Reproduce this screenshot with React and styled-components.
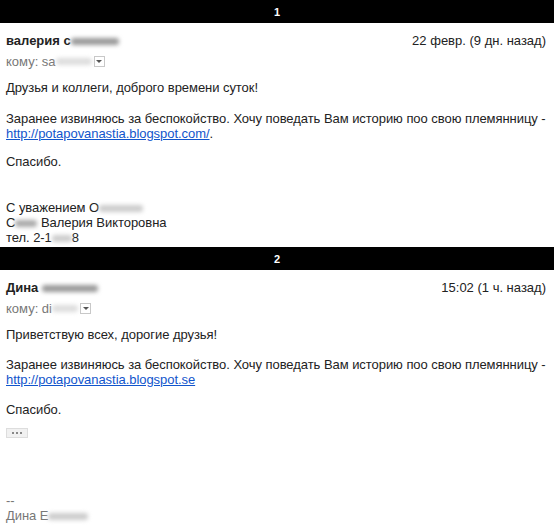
import React from 'react';
import styled, { createGlobalStyle } from 'styled-components';

const GlobalStyle = createGlobalStyle`
  body {
    margin: 0;
    background: #fff;
    font-family: "Liberation Sans", Arial, sans-serif;
    font-size: 13px;
    color: #222;
  }
`;

const Divider = styled.div`
  height: ${(p) => p.$h || 23}px;
  background: #000;
  color: #fff;
  font-size: 11px;
  font-weight: bold;
  display: flex;
  align-items: center;
  justify-content: center;
`;

const Message = styled.div`
  padding: 10px 8px 0 6px;
  height: ${(p) => p.$height}px;
  box-sizing: border-box;
  overflow: hidden;
`;

const Header = styled.div`
  display: flex;
  justify-content: space-between;
  align-items: baseline;
  line-height: 15px;
`;

const Sender = styled.span`
  font-weight: bold;
  color: #222;
`;

const Date = styled.span`
  color: #222;
`;

const Recipients = styled.div`
  display: flex;
  align-items: center;
  color: #777;
  line-height: 15px;
  margin-top: 6px;
`;

// smudged-out part of a name or address
const Hidden = styled.span`
  display: inline-block;
  width: ${(p) => p.$w}px;
  height: 7px;
  background: ${(p) => p.$tone || '#bbb'};
  filter: blur(2px);
  border-radius: 3px;
  vertical-align: middle;
`;

const Toggle = styled.span`
  display: inline-flex;
  align-items: center;
  justify-content: center;
  width: 9px;
  height: 9px;
  margin-left: 2px;
  border: 1px solid #c8c8c8;
  background: #fff;
  &::after {
    content: '';
    border-left: 3px solid transparent;
    border-right: 3px solid transparent;
    border-top: 3px solid #555;
  }
`;

const Body = styled.div`
  margin-top: 11px;
  line-height: 15px;
  letter-spacing: -0.05px;
`;

const Para = styled.div`
  margin-bottom: ${(p) => p.$after ?? 16}px;
`;

const Line = styled.div`
  white-space: nowrap;
`;

const Link = styled.a`
  color: #15c;
  text-decoration: underline;
`;

const More = styled.div`
  display: flex;
  align-items: center;
  justify-content: center;
  gap: 2px;
  width: 20px;
  height: 8px;
  background: #f1f1f1;
  border: 1px solid #ddd;
  span {
    width: 2px;
    height: 2px;
    background: #888;
  }
`;

const Signature = styled.div`
  color: #777;
  line-height: 15px;
  margin-top: ${(p) => p.$top || 0}px;
`;

export default function App() {
  return (
    <>
      <GlobalStyle />
      <Divider>1</Divider>
      <Message $height={224}>
        <Header>
          <Sender>
            валерия с<Hidden $w={48} $tone="#999" />
          </Sender>
          <Date>22 февр. (9 дн. назад)</Date>
        </Header>
        <Recipients>
          кому: sa<Hidden $w={36} $tone="#ddd" />
          <Toggle />
        </Recipients>
        <Body>
          <Para>Друзья и коллеги, доброго времени суток!</Para>
          <Para $after={13}>
            <Line>Заранее извиняюсь за беспокойство. Хочу поведать Вам историю поо свою племянницу -</Line>
            <Link href="#">http://potapovanastia.blogspot.com/</Link>.
          </Para>
          <Para $after={31}>Спасибо.</Para>
          <div>
            С уважением О<Hidden $w={44} $tone="#ccc" />
            <br />
            С<Hidden $w={22} $tone="#aaa" /> Валерия Викторовна
            <br />
            тел. 2-1<Hidden $w={20} $tone="#ccc" />8
          </div>
        </Body>
      </Message>
      <Divider>2</Divider>
      <Message $height={257}>
        <Header>
          <Sender>
            Дина <Hidden $w={56} $tone="#999" />
          </Sender>
          <Date>15:02 (1 ч. назад)</Date>
        </Header>
        <Recipients>
          кому: di<Hidden $w={26} $tone="#ddd" />
          <Toggle />
        </Recipients>
        <Body>
          <Para $after={15}>Приветствую всех, дорогие друзья!</Para>
          <Para $after={15}>
            <Line>Заранее извиняюсь за беспокойство. Хочу поведать Вам историю поо свою племянницу -</Line>
            <Link href="#">http://potapovanastia.blogspot.se</Link>
          </Para>
          <Para $after={11}>Спасибо.</Para>
          <More>
            <span />
            <span />
            <span />
          </More>
          <Signature $top={55}>
            --
            <br />
            Дина Е<Hidden $w={40} $tone="#ccc" />
          </Signature>
        </Body>
      </Message>
    </>
  );
}
